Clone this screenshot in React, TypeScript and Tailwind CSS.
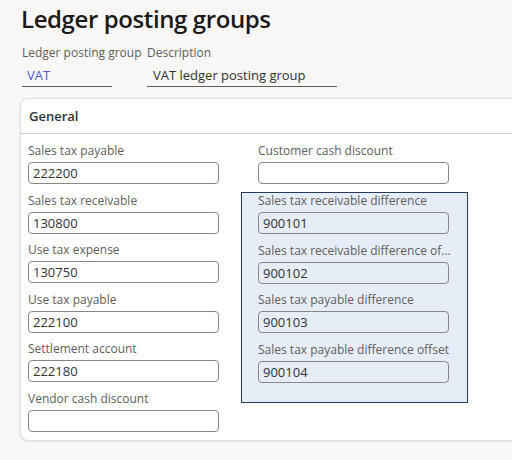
import React from "react";

type Field = { label: string; value: string };

const leftFields: Field[] = [
  { label: "Sales tax payable", value: "222200" },
  { label: "Sales tax receivable", value: "130800" },
  { label: "Use tax expense", value: "130750" },
  { label: "Use tax payable", value: "222100" },
  { label: "Settlement account", value: "222180" },
  { label: "Vendor cash discount", value: "" },
];

const diffFields: Field[] = [
  { label: "Sales tax receivable difference", value: "900101" },
  { label: "Sales tax receivable difference of...", value: "900102" },
  { label: "Sales tax payable difference", value: "900103" },
  { label: "Sales tax payable difference offset", value: "900104" },
];

function FormField({ label, value }: Field) {
  return (
    <div className="flex flex-col w-[191px]">
      <div className="h-[16px] leading-[16px] text-[12px] text-[#605e5c] whitespace-nowrap">{label}</div>
      <div className="mt-[3px] h-[22px] rounded-[4px] border border-[#8a8886] px-[4px] text-[13px] leading-[20px] text-[#323130]">
        {value}
      </div>
    </div>
  );
}

export default function App() {
  return (
    <div
      className="w-[512px] h-[460px] overflow-hidden bg-[#f8f7f6] text-[#201f1e]"
      style={{ fontFamily: '"Open Sans", "Noto Sans", sans-serif' }}
    >
      <h1 className="pl-[21px] pt-[2px] text-[24px] leading-[34px] font-semibold tracking-[-0.4px] text-[#1b1a19]">
        Ledger posting groups
      </h1>

      {/* header fields */}
      <div className="flex gap-[9px] pl-[22px] mt-[9px]">
        <div className="flex flex-col w-[90px]">
          <div className="text-[12px] leading-[16px] text-[#605e5c] whitespace-nowrap">Ledger posting group</div>
          <div className="mt-[5px] h-[21px] border-b border-[#605e5c] pl-[5px] text-[13px] leading-[18px] text-[#4a5bd6]">
            VAT
          </div>
        </div>
        <div className="flex flex-col w-[190px] ml-[26px]">
          <div className="text-[12px] leading-[16px] text-[#605e5c]">Description</div>
          <div className="mt-[5px] h-[21px] border-b border-[#605e5c] pl-[6px] text-[13px] leading-[18px] text-[#323130]">
            VAT ledger posting group
          </div>
        </div>
      </div>

      {/* card */}
      <div className="mt-[11px] ml-[20px] w-[520px] h-[343px] rounded-[8px] border border-[#e1dfdd] bg-white shadow-[0_1px_2px_rgba(0,0,0,0.08)]">
        <div className="h-[35px] border-b border-[#d2d0ce] pl-[8px] text-[13px] leading-[35px] font-semibold text-[#323130]">
          General
        </div>
        <div className="flex gap-[39px] pl-[7px] pt-[9px]">
          <div className="flex flex-col gap-[8.5px]">
            {leftFields.map((f) => (
              <FormField key={f.label} {...f} />
            ))}
          </div>
          <div className="flex flex-col gap-[8px]">
            <FormField label="Customer cash discount" value="" />
            <div className="-ml-[17px] w-[227px] h-[211px] border border-[#243a5e] bg-[#e7edf7] pl-[16px] flex flex-col gap-[8.5px]">
              {diffFields.map((f) => (
                <FormField key={f.label} {...f} />
              ))}
            </div>
          </div>
        </div>
      </div>
    </div>
  );
}
